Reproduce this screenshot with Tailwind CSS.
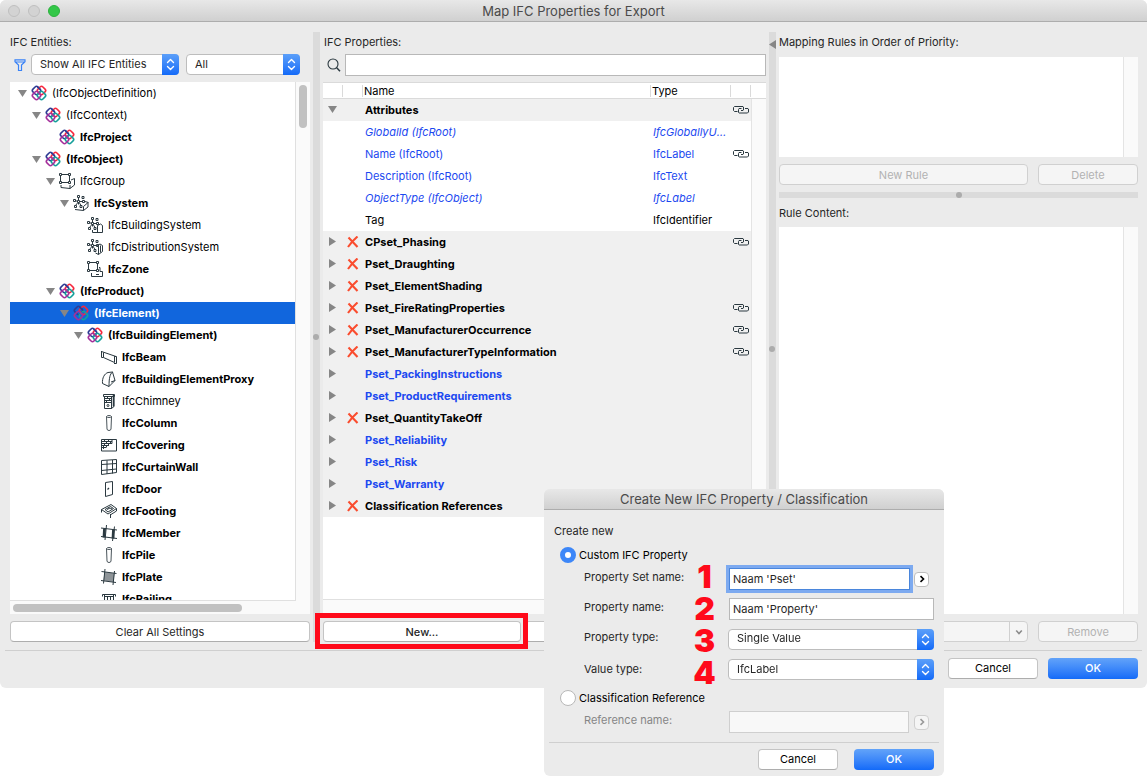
<!DOCTYPE html>
<html lang="en">
<head>
  <meta charset="UTF-8" />
  <meta name="viewport" content="width=device-width, initial-scale=1" />
  <title>Map IFC Properties for Export</title>
  <script src="https://cdn.jsdelivr.net/npm/@tailwindcss/browser@4"></script>
</head>
<body class="relative min-h-screen bg-white font-['Inter','Liberation_Sans',sans-serif] text-[11px] leading-4 text-[#262626]">

  <!-- icon set -->
  <svg class="hidden">
    <symbol id="i-ifc" viewBox="0 0 16 16">
      <g fill="none" stroke-width="1.6">
        <rect x="2" y="2" width="7" height="7" rx="2" transform="rotate(45 5.5 5.5)" stroke="#2f3c94" />
        <rect x="7" y="2" width="7" height="7" rx="2" transform="rotate(45 10.5 5.5)" stroke="#f6293f" />
        <rect x="7" y="7" width="7" height="7" rx="2" transform="rotate(45 10.5 10.5)" stroke="#17a09b" />
        <rect x="2" y="7" width="7" height="7" rx="2" transform="rotate(45 5.5 10.5)" stroke="#a5309b" />
        <path d="M6.500 1.900 9 4.400" stroke="#2f3c94" />
      </g>
    </symbol>
    <symbol id="i-group" viewBox="0 0 16 16">
      <g fill="none" stroke="#2b3940">
        <path d="M1.500 3v6M3 1.500h6M10.500 3v6M3 9.500h6" />
        <path d="M.5.5h2v2h-2zM9.500.5h2v2h-2zM.5 8.500h2v2h-2zM9.500 8.500h2v2h-2z" />
        <path d="M2 12v2.500l9 1v-3.500M11 15.500l4.500-3.500V5.500L12 7" />
      </g>
    </symbol>
    <symbol id="i-nodes" viewBox="0 0 16 16">
      <g fill="none" stroke="#2b3940">
        <path d="M4.500.5h2v2h-2zM9 1.500h2v2H9zM.5 4.500h2v2h-2zM4.500 5.500h2v2h-2zM9.500 5.500h2v2h-2zM1.500 10.500h2v2h-2zM7 10.500h2v2H7z" />
        <path d="M5.500 2.500v3M2.500 6h2M6.500 6.500h3M5.500 7.500v2M2.500 10.500l2-2.500M8 10.500 6.500 8" />
      </g>
    </symbol>
    <symbol id="i-system" viewBox="0 0 16 16">
      <use href="#i-nodes" />
      <path d="M2 14.500l8.500 1v-4l4.500-4v4.500l-4.500 3.500M12 6.500l3.500 1" fill="none" stroke="#2b3940" />
    </symbol>
    <symbol id="i-bsystem" viewBox="0 0 16 16">
      <use href="#i-nodes" />
      <path d="M5.500 13v2.500h10V8.500l-2-1.500-3 1.500v7" fill="none" stroke="#2b3940" />
    </symbol>
    <symbol id="i-dsystem" viewBox="0 0 16 16">
      <use href="#i-nodes" />
      <path d="M11.500 15.500V8l-1-1.500 2.500-1.500 2.500 1.500v6l-4 3-3-1.500M13.500 6.500v7" fill="none" stroke="#2b3940" />
    </symbol>
    <symbol id="i-zone" viewBox="0 0 16 16">
      <g fill="none" stroke="#2b3940">
        <path d="M1.500 3v6M3 1.500h6M10.500 3v6M3 9.500h6" />
        <path d="M.5.5h2v2h-2zM9.500.5h2v2h-2zM.5 8.500h2v2h-2zM9.500 8.500h2v2h-2z" />
        <path d="M4.500 12v3.500h11v-5h-2.500v-4h-1M9 13.500h3" />
      </g>
    </symbol>
    <symbol id="i-beam" viewBox="0 0 16 16">
      <path d="M.5 2v6.500h2M.5 2.500 15 7.500M2.500 3.500v5l11 5M13.500 7.500v6M13 7.500h2.500M13 14.500h2.500v-7" fill="none" stroke="#2b3940" />
    </symbol>
    <symbol id="i-proxy" viewBox="0 0 16 16">
      <path d="M1.500 12.500C1 7 3.500 2.500 7 1.500l4.500-.5L14 9.500l-6 6-6.500-3M11.500 1C9 3 8 7 8 15.500M14 9.500l-4 1.500" fill="none" stroke="#2b3940" />
    </symbol>
    <symbol id="i-chimney" viewBox="0 0 16 16">
      <g fill="none" stroke="#2b3940">
        <path d="M3.500 3.500h7v12h-7zM2.500 1.500h11v2h-11zM10.500 3.500v12l2.500-2V3.500" />
        <path d="M4 5.500h6M4 7.500h6M4 9.500h6M6.500 4v2M8.500 6v2M5.500 8v2" />
        <circle cx="7" cy="12.500" r="1" />
        <path d="M12.500 2v11.500" stroke-width="1.500" />
      </g>
    </symbol>
    <symbol id="i-column" viewBox="0 0 16 16">
      <path d="M5.500 1.500 6 14q.2 1.500 2 1.500t2-1.500L10.500 1.500M5.500 1.500Q6 .500 8 .500t2.500 1Q10 2.500 8 2.500t-2.500-1z" fill="none" stroke="#4a555b" />
    </symbol>
    <symbol id="i-covering" viewBox="0 0 16 16">
      <path d="M.5 2.500h15v11.500H.5z" fill="none" stroke="#2b3940" />
      <path d="M1 4.500h10M1 6.500h10M1 8.500h7M1 10.500h4M3.500 3v1.500M7.500 3v1.500M5.500 4.500v2M9.500 4.500v2M3.500 6.500v2M7.500 6.500v2M2.500 8.500v3.500M5.500 8.500v2M11 3v3.500" fill="none" stroke="#2b3940" />
    </symbol>
    <symbol id="i-curtain" viewBox="0 0 16 16">
      <path d="M.5 1.500 15.500.5v13L.5 15.500zM.5 5.500l15-1M.5 11.500l15-1.500M6 1.500V15M11.500 1v13.500" fill="none" stroke="#2b3940" />
    </symbol>
    <symbol id="i-door" viewBox="0 0 16 16">
      <path d="M4.500 1.500 11.500.5v13l-7 2z" fill="none" stroke="#2b3940" />
      <path d="M6.500 8.500 8 7" stroke="#2b3940" stroke-width="1.300" />
    </symbol>
    <symbol id="i-footing" viewBox="0 0 16 16">
      <path d="M.5 6.500 10 1.500l5.500 4L7 11zM4 6.500 9.500 3.500l3 2L7 9zM.5 6.500v3M15.500 5.500v2.500L10 11.500M9.500 11v4M6 6.500l3-1.500 2 1" fill="none" stroke="#2b3940" />
    </symbol>
    <symbol id="i-member" viewBox="0 0 16 16">
      <path d="M3.500 3.500 3 12.500M12.500 4.500 12 13.500" stroke="#2b3940" stroke-width="2.800" />
      <path d="M0 3l16 2M0 11.500l16 2M5.500 0 4 15M13.500 1.500 11.500 16" fill="none" stroke="#2b3940" />
    </symbol>
    <symbol id="i-plate" viewBox="0 0 16 16">
      <path d="M3.500 3 13.500 4.500 12.500 13 2.500 11.500z" fill="#8e9498" />
      <path d="M.5 2.500l15 2M0 11.500l15 2M4 0 2.500 14.500M13.500 2 12 16" fill="none" stroke="#2b3940" />
    </symbol>
    <symbol id="i-railing" viewBox="0 0 16 16">
      <path d="M1.500 5.500V3.500h13v2M3 5.500h10M3.500 4v11M6.500 6v9M9.500 6v9M12.500 4v11" fill="none" stroke="#2b3940" />
    </symbol>
    <symbol id="i-link" viewBox="0 0 16 8">
      <path d="M4.500 5.500H1.500l-1-1V1.500l1-1h8.500l.5.5v3l-.5.5H8M12 2.500h3l.5.500v3l-1 1H6l-.5-.5V3.500l.5-1h2.500" fill="none" stroke="#2b3940" />
    </symbol>
    <symbol id="i-cross" viewBox="0 0 12 12">
      <path d="M1.500 1.500 10.500 11M10.500.5C7 3.500 3.500 7.500 1 11" fill="none" stroke="#fa4c2e" stroke-width="2.100" />
    </symbol>
    <symbol id="i-updown" viewBox="0 0 9 13">
      <path d="M1.500 4.500l3-3 3 3M1.500 8.500l3 3 3-3" fill="none" stroke="#fff" stroke-width="1.400" stroke-linecap="round" stroke-linejoin="round" />
    </symbol>
    <symbol id="i-down" viewBox="0 0 9 7"><path d="M0 0h9L4.500 7z" fill="#868686" /></symbol>
    <symbol id="i-right" viewBox="0 0 7 9"><path d="M0 0v9l7-4.500z" fill="#868686" /></symbol>
    <symbol id="i-chevron" viewBox="0 0 6 8">
      <path d="M1.500 1.200 4.500 4l-3 2.800" fill="none" stroke="currentColor" stroke-width="1.600" />
    </symbol>
  </svg>

  <!-- main window -->
  <main class="overflow-hidden rounded-md bg-[#ebebeb]">
    <header class="relative flex h-[22px] items-center justify-center border-b border-[#adadad] bg-linear-to-b from-[#e8e8e8] to-[#d0d0d0]">
      <div class="absolute left-2 flex gap-2">
        <button aria-label="Close" class="size-3 rounded-full border border-[#bfbfbf] bg-[#d3d3d3]"></button>
        <button aria-label="Minimize" class="size-3 rounded-full border border-[#bfbfbf] bg-[#d3d3d3]"></button>
        <button aria-label="Zoom" class="size-3 rounded-full border border-[#2bb13d] bg-[#33c748]"></button>
      </div>
      <h1 class="text-[13px] text-[#4a4a4a]">Map IFC Properties for Export</h1>
    </header>

    <div class="flex px-[10px] pt-[10px]">
      <!-- entities -->
      <section class="flex w-[300px] shrink-0 flex-col">
        <h2 class="h-[22px] pt-[2px]">IFC Entities:</h2>
        <div class="flex h-[21px] items-center">
          <svg class="ml-1 mr-[5px] size-3" viewBox="0 0 12 12"><path d="M1 .800h10v2L7.500 6v5.500h-3V6L1 2.800zM1.500 3h9" fill="none" stroke="#3a83f7" stroke-width="1.200" /></svg>
          <div class="relative mr-[7px] h-[21px] w-[148px]">
            <select aria-label="Entity filter" class="h-full w-full appearance-none rounded-[4px] border border-[#bdbdbd] bg-white pb-[2px] pl-2"><option>Show All IFC Entities</option></select>
            <span class="pointer-events-none absolute inset-y-0 right-0 flex w-[17px] items-center justify-center rounded-r-[4px] bg-linear-to-b from-[#5b9ff9] to-[#126af8]"><svg class="h-[13px] w-[9px]"><use href="#i-updown" /></svg></span>
          </div>
          <div class="relative h-[21px] w-[114px]">
            <select aria-label="Scope" class="h-full w-full appearance-none rounded-[4px] border border-[#bdbdbd] bg-white pb-[2px] pl-2"><option>All</option></select>
            <span class="pointer-events-none absolute inset-y-0 right-0 flex w-[17px] items-center justify-center rounded-r-[4px] bg-linear-to-b from-[#5b9ff9] to-[#126af8]"><svg class="h-[13px] w-[9px]"><use href="#i-updown" /></svg></span>
          </div>
        </div>
        <div class="mt-[7px] flex h-[532px] flex-col bg-[#fafafa]">
          <div class="flex min-h-0 flex-1">
            <ul id="tree" class="flex-1 overflow-hidden border-r border-b border-[#e0e0e0] bg-white text-black"></ul>
            <div class="w-[14px] px-[3px] pt-[3px]"><div class="h-[43px] w-2 rounded-full bg-[#c1c1c1]"></div></div>
          </div>
          <div class="h-[13px] px-[3px] pt-[3px]"><div class="h-2 w-[229px] rounded-full bg-[#c1c1c1]"></div></div>
        </div>
        <button class="mt-[7px] h-[21px] rounded-[4px] border border-[#c4c4c4] border-b-[#adadad] bg-white">Clear All Settings</button>
      </section>

      <div class="mx-[3px] flex w-[7px] shrink-0 items-center bg-[#dbdbdb]"><span class="size-[6px] shrink-0 rounded-full bg-[#acacac]"></span></div>

      <!-- properties -->
      <section class="flex min-w-0 flex-1 flex-col">
        <h2 class="h-[22px] pt-[2px] pl-px">IFC Properties:</h2>
        <div class="flex h-[22px] items-center">
          <svg class="ml-1 mr-1 size-[14px]" viewBox="0 0 14 14"><circle cx="6" cy="6" r="5" fill="none" stroke="#2b3940" stroke-width="1.100" /><path d="M9.700 9.700 13 13.300" stroke="#2b3940" stroke-width="1.500" /></svg>
          <input type="text" aria-label="Search properties" class="h-full min-w-0 flex-1 border border-[#b8b8b8] bg-white px-1" />
        </div>
        <div class="mt-[6px] flex h-[532px] flex-col bg-white">
          <div class="relative min-h-0 flex-1 overflow-hidden">
            <table class="w-full table-fixed border-collapse text-left text-black">
              <thead>
                <tr class="h-4 border-y border-[#dadada] leading-3">
                  <th class="w-5 p-0"><div class="h-3 border-r border-[#dadada]"></div></th>
                  <th class="w-5 p-0"><div class="h-3 border-r border-[#dadada]"></div></th>
                  <th class="p-0 font-normal"><div class="h-3 border-r border-[#dadada] pl-px">Name</div></th>
                  <th class="w-20 p-0 font-normal"><div class="h-3 border-r border-[#dadada] pl-px">Type</div></th>
                  <th class="w-5 p-0"><div class="h-3 border-r border-[#dadada]"></div></th>
                  <th class="w-[15px] p-0"></th>
                </tr>
              </thead>
              <tbody id="props"></tbody>
            </table>
            <div class="absolute top-[17px] right-0 bottom-0 w-[15px] border-l border-[#e4e4e4] bg-[#fafafa]"></div>
          </div>
          <div class="h-[15px] border-t border-[#e0e0e0] bg-[#fafafa]"></div>
        </div>
        <div class="mt-[7px] flex h-[21px] gap-1">
          <div class="relative w-[198px]">
            <button class="h-full w-full rounded-[4px] border border-[#c4c4c4] border-b-[#adadad] bg-white font-medium">New...</button>
            <span class="pointer-events-none absolute -top-2 -right-[7px] -bottom-[7px] -left-2 border-[5px] border-[#ff0a1a]"></span>
          </div>
          <button aria-label="Delete property" class="flex-1 rounded-[4px] border border-[#c4c4c4] border-b-[#adadad] bg-white"></button>
        </div>
      </section>

      <div class="mx-[3px] flex w-[7px] shrink-0 flex-col items-start bg-[#dbdbdb]">
        <div class="flex h-6 items-center"><svg class="h-[9px] w-[7px] rotate-180"><use href="#i-right" /></svg></div>
        <div class="flex flex-1 items-center"><span class="size-[6px] rounded-full bg-[#acacac]"></span></div>
      </div>

      <!-- mapping rules -->
      <section class="mr-[-1px] flex w-[359px] shrink-0 flex-col">
        <h2 class="h-[25px] pt-[2px]">Mapping Rules in Order of Priority:</h2>
        <div class="flex h-[100px] bg-white"><div class="flex-1"></div><div class="w-[15px] border-l border-[#e4e4e4] bg-[#fafafa]"></div></div>
        <div class="mt-[7px] flex h-[21px] gap-[10px]">
          <button disabled class="flex-1 rounded-[4px] border border-[#d0d0d0] bg-[#f5f5f5] text-[#b2b2b2]">New Rule</button>
          <button disabled class="w-[100px] rounded-[4px] border border-[#d0d0d0] bg-[#f5f5f5] text-[#b2b2b2]">Delete</button>
        </div>
        <div class="mt-[7px] flex h-[6px] items-center justify-center bg-[#dbdbdb]"><span class="size-[6px] rounded-full bg-[#acacac]"></span></div>
        <h2 class="mt-[7px] h-[22px]">Rule Content:</h2>
        <div class="flex flex-1 bg-white"><div class="flex-1"></div><div class="w-[15px] border-l border-[#e4e4e4] bg-[#fafafa]"></div></div>
        <div class="mt-[7px] flex h-[21px] gap-[10px]">
          <div class="relative flex-1">
            <select disabled aria-label="Add content" class="h-full w-full appearance-none rounded-[4px] border border-[#d0d0d0] bg-[#f5f5f5]"></select>
            <span class="pointer-events-none absolute inset-y-0 right-0 flex w-[19px] items-center justify-center border-l border-[#d0d0d0] text-[#8c8c8c]"><svg class="h-2 w-[6px] rotate-90"><use href="#i-chevron" /></svg></span>
          </div>
          <button disabled class="w-[100px] rounded-[4px] border border-[#d0d0d0] bg-[#f5f5f5] text-[#b2b2b2]">Remove</button>
        </div>
      </section>
    </div>

    <footer class="mx-[5px] mt-2 flex justify-end gap-[10px] border-t border-[#cfcfcf] pt-[7px] pr-1 pb-[9px]">
      <button class="h-[21px] w-[90px] rounded-[4px] border border-[#c4c4c4] border-b-[#adadad] bg-white pb-px text-black">Cancel</button>
      <button class="h-[21px] w-[90px] rounded-[4px] bg-linear-to-b from-[#62a3f9] to-[#126af8] pb-px font-medium text-white">OK</button>
    </footer>
  </main>

  <!-- new property dialog -->
  <form class="absolute top-[489px] left-[544px] w-[400px] overflow-hidden rounded-md bg-[#ebebeb]">
    <div class="flex h-[21px] items-center justify-center border-b border-[#adadad] bg-linear-to-b from-[#e8e8e8] to-[#d0d0d0]">
      <h2 class="text-[13px] text-[#4a4a4a]">Create New IFC Property / Classification</h2>
    </div>
    <p class="h-9 pt-[13px] pl-[10px]">Create new</p>
    <div class="flex h-[18px] items-center gap-[3px] pl-4 text-black">
      <input type="radio" name="kind" id="custom" checked class="size-4 appearance-none rounded-full border border-[#b8b8b8] bg-white checked:border-[5px] checked:border-[#3d87f8]" />
      <label for="custom">Custom IFC Property</label>
    </div>
    <div class="flex h-[121px] pr-[10px] pl-10">
      <div class="flex w-[109px] flex-col">
        <label for="pset" class="h-[30px] pt-[5px]">Property Set name:</label>
        <label for="pname" class="h-[30px] pt-[5px]">Property name:</label>
        <label for="ptype" class="h-[30px] pt-[5px]">Property type:</label>
        <label for="vtype" class="h-[31px] pt-[7px]">Value type:</label>
      </div>
      <!-- step markers -->
      <div class="-mt-[3px] w-[23px] text-center text-[32px] leading-8 font-black text-[#ff0a1a]">
        <div>1</div>
        <div>2</div>
        <div>3</div>
        <div>4</div>
      </div>
      <div class="ml-3 flex flex-1 flex-col">
        <div class="flex h-[30px] items-center">
          <input type="text" id="pset" value="Naam 'Pset'" class="ml-px h-[22px] w-[181px] border border-[#4a86dc] bg-white px-[3px] outline-[3px] outline-[#7daaf0]" />
          <button type="button" aria-label="Browse" class="ml-1 flex size-[15px] items-center justify-center rounded-[4px] border border-[#bdbdbd] bg-white text-black"><svg class="h-2 w-[6px]"><use href="#i-chevron" /></svg></button>
        </div>
        <div class="flex h-[30px] items-center">
          <input type="text" id="pname" value="Naam 'Property'" class="ml-px h-[22px] min-w-0 flex-1 border border-[#b8b8b8] bg-white px-[3px]" />
        </div>
        <div class="flex h-[30px] items-center">
          <div class="relative h-[21px] flex-1">
            <select id="ptype" class="h-full w-full appearance-none rounded-[4px] border border-[#bdbdbd] bg-white pb-[2px] pl-2"><option>Single Value</option></select>
            <span class="pointer-events-none absolute inset-y-0 right-0 flex w-[17px] items-center justify-center rounded-r-[4px] bg-linear-to-b from-[#5b9ff9] to-[#126af8]"><svg class="h-[13px] w-[9px]"><use href="#i-updown" /></svg></span>
          </div>
        </div>
        <div class="flex h-[31px] items-center">
          <div class="relative h-[21px] flex-1">
            <select id="vtype" class="h-full w-full appearance-none rounded-[4px] border border-[#bdbdbd] bg-white pb-[2px] pl-2"><option>IfcLabel</option></select>
            <span class="pointer-events-none absolute inset-y-0 right-0 flex w-[17px] items-center justify-center rounded-r-[4px] bg-linear-to-b from-[#5b9ff9] to-[#126af8]"><svg class="h-[13px] w-[9px]"><use href="#i-updown" /></svg></span>
          </div>
        </div>
      </div>
    </div>
    <div class="flex h-[26px] items-center gap-[3px] pl-4 text-black">
      <input type="radio" name="kind" id="classref" class="size-4 appearance-none rounded-full border border-[#b8b8b8] bg-white checked:border-[5px] checked:border-[#3d87f8]" />
      <label for="classref">Classification Reference</label>
    </div>
    <div class="flex h-[22px] items-center pr-[10px] pl-10">
      <label for="refname" class="w-[145px] pb-1 text-[#868686]">Reference name:</label>
      <input type="text" id="refname" disabled class="h-[22px] w-[180px] border border-[#cfcfcf] bg-[#f8f8f8] px-[3px]" />
      <button type="button" disabled aria-label="Browse references" class="ml-[5px] flex size-[15px] items-center justify-center rounded-[4px] border border-[#cfcfcf] bg-[#f5f5f5] text-[#999999]"><svg class="h-2 w-[6px]"><use href="#i-chevron" /></svg></button>
    </div>
    <div class="mx-[5px] mt-[9px] flex justify-end gap-4 border-t border-[#cfcfcf] pt-[6px] pr-[5px] pb-[6px]">
      <button type="button" class="h-[21px] w-20 rounded-[4px] border border-[#c4c4c4] border-b-[#adadad] bg-white pb-px text-black">Cancel</button>
      <button type="button" class="h-[21px] w-20 rounded-[4px] bg-linear-to-b from-[#62a3f9] to-[#126af8] pb-px font-medium text-white">OK</button>
    </div>
  </form>

  <script>
    // level, icon, name, bold, open
    const entities = [
      [0, 'ifc', '(IfcObjectDefinition)', 0, 1],
      [1, 'ifc', '(IfcContext)', 0, 1],
      [2, 'ifc', 'IfcProject', 1, 0],
      [1, 'ifc', '(IfcObject)', 1, 1],
      [2, 'group', 'IfcGroup', 0, 1],
      [3, 'system', 'IfcSystem', 1, 1],
      [4, 'bsystem', 'IfcBuildingSystem', 0, 0],
      [4, 'dsystem', 'IfcDistributionSystem', 0, 0],
      [4, 'zone', 'IfcZone', 1, 0],
      [2, 'ifc', '(IfcProduct)', 1, 1],
      [3, 'ifc', '(IfcElement)', 1, 1],
      [4, 'ifc', '(IfcBuildingElement)', 1, 1],
      [5, 'beam', 'IfcBeam', 1, 0],
      [5, 'proxy', 'IfcBuildingElementProxy', 1, 0],
      [5, 'chimney', 'IfcChimney', 0, 0],
      [5, 'column', 'IfcColumn', 1, 0],
      [5, 'covering', 'IfcCovering', 1, 0],
      [5, 'curtain', 'IfcCurtainWall', 1, 0],
      [5, 'door', 'IfcDoor', 1, 0],
      [5, 'footing', 'IfcFooting', 1, 0],
      [5, 'member', 'IfcMember', 1, 0],
      [5, 'column', 'IfcPile', 1, 0],
      [5, 'plate', 'IfcPlate', 1, 0],
      [5, 'railing', 'IfcRailing', 1, 0],
    ];
    const selected = '(IfcElement)';

    document.getElementById('tree').innerHTML = entities.map(([level, icon, name, bold, open]) => `
      <li class="flex h-[22px] items-center ${name === selected ? 'bg-[#1166dd] text-white' : ''}" style="padding-left:${8 + level * 14}px">
        <span class="w-[13px] shrink-0">${open ? '<svg class="h-[7px] w-[9px]"><use href="#i-down" /></svg>' : ''}</span>
        <svg class="mr-[5px] size-4 shrink-0"><use href="#i-${icon}" /></svg>
        <span class="${bold ? 'font-bold' : ''}">${name}</span>
      </li>`).join('');

    const attributes = [
      { name: 'GlobalId (IfcRoot)', type: 'IfcGloballyUniqueId', style: 'text-[#1c49f0] italic' },
      { name: 'Name (IfcRoot)', type: 'IfcLabel', style: 'text-[#1c49f0]', link: true },
      { name: 'Description (IfcRoot)', type: 'IfcText', style: 'text-[#1c49f0]' },
      { name: 'ObjectType (IfcObject)', type: 'IfcLabel', style: 'text-[#1c49f0] italic' },
      { name: 'Tag', type: 'IfcIdentifier', style: '' },
    ];
    const psets = [
      { name: 'CPset_Phasing', custom: true, link: true },
      { name: 'Pset_Draughting', custom: true },
      { name: 'Pset_ElementShading', custom: true },
      { name: 'Pset_FireRatingProperties', custom: true, link: true },
      { name: 'Pset_ManufacturerOccurrence', custom: true, link: true },
      { name: 'Pset_ManufacturerTypeInformation', custom: true, link: true },
      { name: 'Pset_PackingInstructions' },
      { name: 'Pset_ProductRequirements' },
      { name: 'Pset_QuantityTakeOff', custom: true },
      { name: 'Pset_Reliability' },
      { name: 'Pset_Risk' },
      { name: 'Pset_Warranty' },
      { name: 'Classification References', custom: true },
    ];
    const linkIcon = '<svg class="ml-[2px] h-2 w-4"><use href="#i-link" /></svg>';

    function groupRow(p, arrow) {
      return `
        <tr class="h-[22px] bg-[#f0f0f0]">
          <td class="p-0">${arrow}</td>
          <td class="p-0">${p.custom ? '<svg class="ml-1 size-3"><use href="#i-cross" /></svg>' : ''}</td>
          <td class="p-0 pl-[2px] font-bold ${p.custom || p.open ? '' : 'text-[#1c49f0]'}">${p.name}</td>
          <td class="p-0"></td>
          <td class="p-0">${p.link ? linkIcon : ''}</td>
          <td class="p-0"></td>
        </tr>`;
    }

    document.getElementById('props').innerHTML =
      groupRow({ name: 'Attributes', open: true, link: true }, '<svg class="ml-[5px] h-[7px] w-[9px]"><use href="#i-down" /></svg>') +
      attributes.map(a => `
        <tr class="h-[22px] ${a.style}">
          <td class="p-0"></td>
          <td class="p-0"></td>
          <td class="p-0 pl-[2px]">${a.name}</td>
          <td class="truncate p-0 pr-1 pl-[2px]">${a.type}</td>
          <td class="p-0">${a.link ? linkIcon : ''}</td>
          <td class="p-0"></td>
        </tr>`).join('') +
      psets.map(p => groupRow(p, '<svg class="ml-[6px] h-[9px] w-[7px]"><use href="#i-right" /></svg>')).join('');

    // caret goes after the suggested set name
    const pset = document.getElementById('pset');
    pset.focus();
    pset.setSelectionRange(pset.value.length, pset.value.length);
  </script>
</body>
</html>
